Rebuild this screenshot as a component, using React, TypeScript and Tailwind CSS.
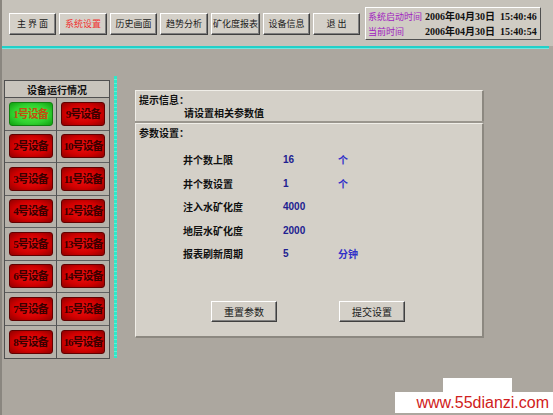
import React from 'react';

const CJK = '"Noto Sans CJK SC", "Liberation Sans", sans-serif';
const SERIF = '"Liberation Serif", "Noto Sans CJK SC", serif';

const navItems = [
  { label: '主 界 面', w: 'w-[47px]' },
  { label: '系统设置', w: 'w-[48px]', active: true },
  { label: '历史画面', w: 'w-[47px]' },
  { label: '趋势分析', w: 'w-[48px]' },
  { label: '矿化度报表', w: 'w-[49px]' },
  { label: '设备信息', w: 'w-[47px]' },
  { label: '退 出', w: 'w-[47px]' },
];

const params = [
  { label: '井个数上限', value: '16', unit: '个' },
  { label: '井个数设置', value: '1', unit: '个' },
  { label: '注入水矿化度', value: '4000', unit: '' },
  { label: '地层水矿化度', value: '2000', unit: '' },
  { label: '报表刷新周期', value: '5', unit: '分钟' },
];

const NavButton = ({ label, w, active }: { label: string; w: string; active?: boolean }) => (
  <div
    className={`${w} h-[22px] flex items-center justify-center whitespace-nowrap bg-[#d4d0c8] border border-t-white border-l-white border-r-[#404040] border-b-[#404040] shadow-[inset_-1px_-1px_0_#808080] text-[9px] ${
      active ? 'text-[#f03030]' : 'text-[#202020]'
    }`}
  >
    {label}
  </div>
);

const Device = ({ n, on }: { n: number; on?: boolean }) => (
  <div
    className={`h-[24px] w-[44px] rounded-[3px] flex items-center justify-center whitespace-nowrap font-bold text-[11px] tracking-[-1px] border ${
      on
        ? 'bg-[radial-gradient(ellipse_at_center,#50f040_0%,#30d030_60%,#10a010_100%)] border-[#108010] text-[#c05010]'
        : 'bg-[radial-gradient(ellipse_at_center,#f01010_0%,#d00000_60%,#900000_100%)] border-[#600000] text-[#3a0000]'
    }`}
    style={{ fontFamily: SERIF }}
  >
    {n}号设备
  </div>
);

const FlatButton = ({ label }: { label: string }) => (
  <div className="w-[66px] h-[21px] flex items-center justify-center bg-[#d4d0c8] border border-t-white border-l-white border-r-[#404040] border-b-[#404040] shadow-[inset_-1px_-1px_0_#808080] text-[10px] text-[#202020]">
    {label}
  </div>
);

export default function App() {
  const rows = [1, 2, 3, 4, 5, 6, 7, 8];
  return (
    <div
      className="relative w-[553px] h-[415px] overflow-hidden bg-[#aca79f] border-l-2 border-l-[#8a867f] flex flex-col"
      style={{ fontFamily: CJK }}
    >
      {/* top bar */}
      <div className="h-[46px] bg-[#c6c2ba] flex items-start">
        <div className="flex gap-[3px] pl-[7px] pt-[13px]">
          {navItems.map((it) => (
            <NavButton key={it.label} {...it} />
          ))}
        </div>
        <div className="ml-[5px] mt-[7px] w-[176px] h-[33px] bg-[#d0ccc4] border border-t-white border-l-white border-r-[#505050] border-b-[#505050] flex flex-col justify-center pl-[2px] gap-[2px]">
          <div className="flex items-center whitespace-nowrap text-[9px] leading-[13px]">
            <span className="text-[#a020c0] w-[57px]">系统启动时间</span>
            <span className="text-[#101010] font-bold text-[10px]" style={{ fontFamily: SERIF }}>
              2006年04月30日&nbsp;&nbsp;15:40:46
            </span>
          </div>
          <div className="flex items-center whitespace-nowrap text-[9px] leading-[13px]">
            <span className="text-[#a020c0] w-[57px]">当前时间</span>
            <span className="text-[#101010] font-bold text-[10px]" style={{ fontFamily: SERIF }}>
              2006年04月30日&nbsp;&nbsp;15:40:54
            </span>
          </div>
        </div>
      </div>
      <div className="h-[3px] w-[547px] bg-[#22d0c8] border-b border-b-[#70e8e0]" />

      {/* content */}
      <div className="flex items-start">
        {/* device panel */}
        <div className="ml-[2px] mt-[31px] w-[106px] border border-[#505050] bg-[#b6b2aa]">
          <div className="h-[17px] bg-[#c8c4bc] border-b border-[#505050] flex items-center justify-center text-[10px] font-bold text-[#101010]">
            设备运行情况
          </div>
          <div className="grid grid-cols-2">
            {rows.map((r) => (
              <React.Fragment key={r}>
                <div className={`h-[32.5px] flex items-center justify-center border-r border-[#505050] ${r < 8 ? 'border-b border-b-[#606060]' : ''}`}>
                  <Device n={r} on={r === 1} />
                </div>
                <div className={`h-[32.5px] flex items-center justify-center ${r < 8 ? 'border-b border-b-[#606060]' : ''}`}>
                  <Device n={r + 8} />
                </div>
              </React.Fragment>
            ))}
          </div>
        </div>

        {/* cyan divider */}
        <div className="ml-[4px] mt-[27px] w-[3px] h-[282px] bg-[repeating-linear-gradient(to_bottom,#30e8c8_0px,#30e8c8_3px,#60f0d8_3px,#60f0d8_4px)]" />

        {/* main panel */}
        <div className="ml-[18px] mt-[41px] w-[349px] flex flex-col">
          <div className="h-[31px] bg-[#d4d0c8] border-t border-l border-t-[#f0eee8] border-l-[#f0eee8] border-r-2 border-r-[#8c8880] px-[3px] pt-[2px] text-[10px] text-[#101010] font-bold">
            <div className="leading-[13px]">提示信息：</div>
            <div className="leading-[13px] pl-[45px]">请设置相关参数值</div>
          </div>
          <div className="h-[2px] bg-[#9a968e]" />
          <div className="h-[215px] bg-[#d4d0c8] border-t border-l border-t-[#f0eee8] border-l-[#f0eee8] border-r-2 border-r-[#8c8880] border-b-2 border-b-[#8c8880] flex flex-col">
            <div className="px-[3px] pt-[2px] text-[10px] leading-[13px] font-bold text-[#101010]">参数设置：</div>
            <div className="mt-[14px] flex flex-col gap-[10px] pl-[47px]">
              {params.map((p) => (
                <div key={p.label} className="flex items-center h-[13.5px] text-[10px]">
                  <span className="w-[100px] font-bold text-[#101010]">{p.label}</span>
                  <span
                    className="w-[55px] font-bold text-[#202090]"
                    style={{ fontFamily: '"Liberation Sans", sans-serif' }}
                  >
                    {p.value}
                  </span>
                  <span className="font-bold text-[#3030c8]">{p.unit}</span>
                </div>
              ))}
            </div>
            <div className="mt-auto mb-[14px] flex pl-[75px] gap-[62px]">
              <FlatButton label="重置参数" />
              <FlatButton label="提交设置" />
            </div>
          </div>
        </div>
      </div>

      {/* watermark */}
      <div className="absolute right-[41px] bottom-[22px] w-[69px] h-[15px] bg-white" />
      <div className="absolute right-0 bottom-[2px] w-[158px] h-[21px] bg-white flex items-center justify-end pr-[4px]">
        <span
          className="text-[16px] text-[#d02020] leading-none"
          style={{ fontFamily: '"Liberation Sans", sans-serif' }}
        >
          www.55dianzi.com
        </span>
      </div>
    </div>
  );
}
